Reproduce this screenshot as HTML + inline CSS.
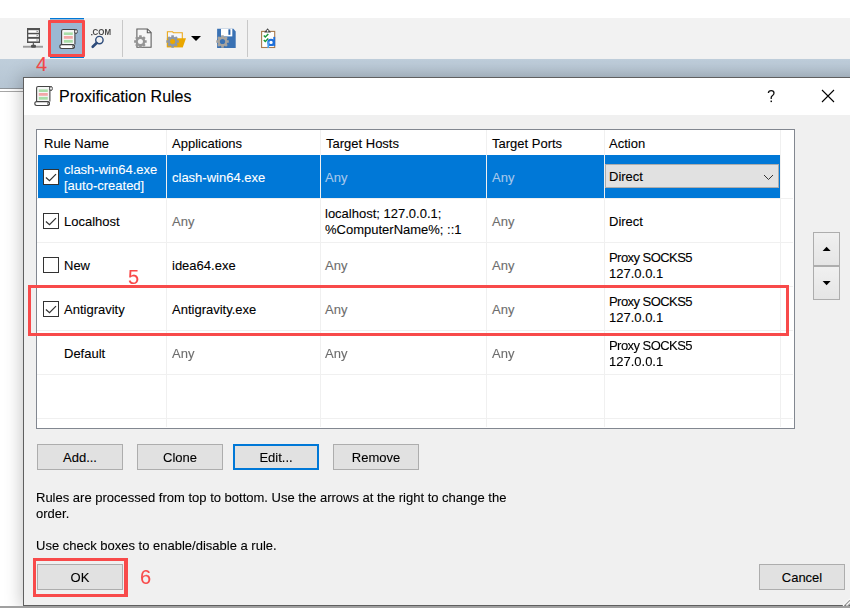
<!DOCTYPE html>
<html><head><meta charset="utf-8">
<style>
*{box-sizing:border-box;margin:0;padding:0}
html,body{width:850px;height:608px;overflow:hidden;background:#fff;font-family:"Liberation Sans",sans-serif;font-size:13px;color:#000;-webkit-text-stroke:0.1px}
.a{position:absolute}
.t{position:absolute;white-space:nowrap;line-height:16px;font-size:13px}
.g{color:#6d6d6d}
.w{color:#fff}
.btn{position:absolute;background:#e1e1e1;border:1px solid #adadad;text-align:center;line-height:24px;font-size:13px;padding-top:1px}
.vl{position:absolute;width:1px;background:#f0f0f0}
.hl{position:absolute;height:1px;background:#f0f0f0;left:37px;width:757px}
.cb{position:absolute;left:43px;width:16px;height:16px;border:1px solid #333;background:#fff}
.red{position:absolute;border:3px solid #f84a4a}
.num{position:absolute;color:#f84a4a;font-size:19px;line-height:20px}
</style></head><body>
<!-- toolbar -->
<div class="a" style="left:0;top:18px;width:850px;height:41px;background:#f2f2f2"></div>
<div class="a" style="left:50px;top:18px;width:34px;height:40px;background:#9bb8d3;border-top:1px solid #0078d7;border-bottom:1px solid #0078d7"></div>
<div class="a" style="left:122px;top:20px;width:1px;height:37px;background:#c8c8c8"></div>
<div class="a" style="left:247px;top:20px;width:1px;height:37px;background:#c8c8c8"></div>

<!-- server icon -->
<svg class="a" style="left:20px;top:24px" width="26" height="26" viewBox="0 0 26 26">
 <rect x="7" y="4" width="13" height="15" fill="#525252"/>
 <rect x="8.3" y="6.2" width="10.5" height="2.6" fill="#fff"/>
 <rect x="8.3" y="10.3" width="10.5" height="2.6" fill="#fff"/>
 <rect x="8.3" y="14.8" width="10.5" height="2.6" fill="#fff"/>
 <path d="M16.6 6.6 L18.2 7.5 L16.6 8.4Z M16.6 10.7 L18.2 11.6 L16.6 12.5Z M16.6 15.2 L18.2 16.1 L16.6 17Z" fill="#777"/>
 <rect x="12.8" y="19" width="1.2" height="2.5" fill="#666"/>
 <rect x="3" y="21.8" width="20" height="1.9" fill="#9c9c9c"/>
 <rect x="11" y="20.7" width="5" height="3" rx="1.2" fill="#505050"/>
</svg>
<svg class="a" style="left:55px;top:26px" width="26" height="26" viewBox="0 0 26 26"><path d="M6.6 18.5 V5 Q6.6 3.5 8.1 3.5 H19.9 V18.5" fill="#f6f6f6" stroke="#444" stroke-width="1.1"/>
 <ellipse cx="21" cy="5.5" rx="1.35" ry="2.05" fill="#fff" stroke="#444" stroke-width="1"/>
 <rect x="8.8" y="6.4" width="9" height="2.6" fill="#a8dea8"/>
 <rect x="8.8" y="10" width="9" height="2.8" fill="#f2a8a8"/>
 <rect x="8.8" y="13.9" width="9" height="2.8" fill="#a8dea8"/>
 <rect x="4.8" y="18.6" width="14.6" height="3.9" rx="1.95" fill="#fff" stroke="#444" stroke-width="1.1"/>
 <ellipse cx="18.6" cy="20.5" rx="0.9" ry="1.6" fill="none" stroke="#444" stroke-width="0.9"/></svg>
<!-- .COM icon -->
<svg class="a" style="left:87px;top:24px;will-change:transform" width="28" height="28" viewBox="0 0 28 28">
 <rect x="4" y="10" width="1.5" height="1.3" fill="#555"/>
 <text x="5.6" y="10.9" font-family="Liberation Sans" font-weight="bold" font-size="8.2" fill="#4a4a4a" textLength="18.5" lengthAdjust="spacingAndGlyphs">COM</text>
 <circle cx="12.4" cy="16.1" r="3.7" fill="none" stroke="#2d4b7a" stroke-width="1.4"/>
 <line x1="9.6" y1="19" x2="5.7" y2="22.8" stroke="#2d4b7a" stroke-width="2.6" stroke-linecap="round"/>
</svg>
<!-- doc gear -->
<svg class="a" style="left:130px;top:24px" width="28" height="28" viewBox="0 0 28 28">
 <path d="M6.9 4.9 H17.5 L21.1 8.5 V23.2 H6.9 Z" fill="#f6f6f6" stroke="#5a5a5a" stroke-width="1.05"/>
 <path d="M17.3 4.9 V8.7 H21.1" fill="none" stroke="#5a5a5a" stroke-width="1.05"/>
 <path d="M9.07 12.78 L9.15 11.22 L11.65 11.22 L11.73 12.78 L12.79 13.22 L13.96 12.18 L15.72 13.94 L14.68 15.11 L15.12 16.17 L16.68 16.25 L16.68 18.75 L15.12 18.83 L14.68 19.89 L15.72 21.06 L13.96 22.82 L12.79 21.78 L11.73 22.22 L11.65 23.78 L9.15 23.78 L9.07 22.22 L8.01 21.78 L6.84 22.82 L5.08 21.06 L6.12 19.89 L5.68 18.83 L4.12 18.75 L4.12 16.25 L5.68 16.17 L6.12 15.11 L5.08 13.94 L6.84 12.18 L8.01 13.22 Z" fill="#959595"/>
 <circle cx="10.4" cy="17.5" r="2.5" fill="#f6f6f6"/>
</svg>
<!-- folder -->
<svg class="a" style="left:162px;top:24px" width="28" height="28" viewBox="0 0 28 28">
 <path d="M5.4 7.7 H10.5 L11.3 8.7 H20.3 V22.7 H5.4 Z" fill="#f4f7fc" stroke="#eba81a" stroke-width="1.1"/>
 <path d="M14.6 14.3 H24 L20.8 23.2 H4.9 V14.3 Z" fill="#eaa700"/>
 <path d="M9.27 12.78 L9.35 11.22 L11.85 11.22 L11.93 12.78 L12.99 13.22 L14.16 12.18 L15.92 13.94 L14.88 15.11 L15.32 16.17 L16.88 16.25 L16.88 18.75 L15.32 18.83 L14.88 19.89 L15.92 21.06 L14.16 22.82 L12.99 21.78 L11.93 22.22 L11.85 23.78 L9.35 23.78 L9.27 22.22 L8.21 21.78 L7.04 22.82 L5.28 21.06 L6.32 19.89 L5.88 18.83 L4.32 18.75 L4.32 16.25 L5.88 16.17 L6.32 15.11 L5.28 13.94 L7.04 12.18 L8.21 13.22 Z" fill="#8e98a6"/>
 <circle cx="10.6" cy="17.5" r="2.5" fill="#eaa700"/>
</svg>
<svg class="a" style="left:190px;top:35px" width="12" height="7" viewBox="0 0 12 7"><path d="M1 1 H11 L6 6 Z" fill="#000"/></svg>
<!-- floppy -->
<svg class="a" style="left:212px;top:24px" width="28" height="28" viewBox="0 0 28 28">
 <path d="M5.1 4.8 H21.4 L23.7 7.4 V24 H5.1 Z" fill="#3a72b4"/>
 <rect x="9" y="4.8" width="11.3" height="7.6" fill="#fff"/>
 <rect x="16.4" y="5.3" width="2" height="5.5" fill="#2a62a8"/>
 <path d="M9.17 12.78 L9.25 11.22 L11.75 11.22 L11.83 12.78 L12.89 13.22 L14.06 12.18 L15.82 13.94 L14.78 15.11 L15.22 16.17 L16.78 16.25 L16.78 18.75 L15.22 18.83 L14.78 19.89 L15.82 21.06 L14.06 22.82 L12.89 21.78 L11.83 22.22 L11.75 23.78 L9.25 23.78 L9.17 22.22 L8.11 21.78 L6.94 22.82 L5.18 21.06 L6.22 19.89 L5.78 18.83 L4.22 18.75 L4.22 16.25 L5.78 16.17 L6.22 15.11 L5.18 13.94 L6.94 12.18 L8.11 13.22 Z" fill="#a8a49e"/>
 <circle cx="10.5" cy="17.5" r="2.6" fill="#3a72b4"/>
</svg>
<!-- clipboard -->
<svg class="a" style="left:254px;top:24px" width="28" height="28" viewBox="0 0 28 28">
 <rect x="7.6" y="7.4" width="13.1" height="16.1" fill="#fff" stroke="#a87a4c" stroke-width="1.1"/>
 <path d="M10.1 8.4 L13.6 4.2 L17 8.4 Z" fill="#444"/>
 <circle cx="13.6" cy="6.8" r="0.9" fill="#fff"/>
 <path d="M9.8 11.5 L11.3 13 L14.3 10" fill="none" stroke="#1a9a3a" stroke-width="1.5"/>
 <path d="M9.8 16 L11.3 17.5 L14.3 14.5" fill="none" stroke="#1a9a3a" stroke-width="1.5"/>
 <circle cx="17" cy="18.4" r="2.7" fill="none" stroke="#1e6fd9" stroke-width="2"/>
 <rect x="19.3" y="12.9" width="1.9" height="9.2" fill="#1e6fd9"/>
 <rect x="13.4" y="17.5" width="1.7" height="6.5" fill="#4aa0f0"/>
</svg>
<div class="red" style="left:48px;top:20px;width:37px;height:37px;border-radius:1px"></div>

<!-- blue bar -->
<div class="a" style="left:0;top:59px;width:850px;height:29px;background:linear-gradient(#bfcedb,#b6c5d3)"></div>
<div class="a" style="left:0;top:88px;width:850px;height:1px;background:#8e9398"></div>
<div class="a" style="left:0;top:91px;width:850px;height:1px;background:#a6a6a6"></div>
<div class="num" style="left:36px;top:53px;font-size:20px;line-height:22px">4</div>

<!-- dialog -->
<div class="a" style="left:23px;top:77px;width:840px;height:529px;border:1px solid #5f5f5f;background:#f0f0f0;box-shadow:0 0 16px 2px rgba(0,0,0,0.22)"></div>
<div class="a" style="left:24px;top:78px;width:830px;height:37px;background:#fff"></div>
<div class="a" style="left:0;top:606px;width:850px;height:2px;background:#a0a0a0"></div>
<svg class="a" style="left:840px;top:596px" width="10" height="10" viewBox="0 0 10 10"><path d="M3 10 L10 3 M6.5 10 L10 6.5" stroke="#fff" stroke-width="1.2"/><path d="M4.2 10 L10 4.2 M7.7 10 L10 7.7" stroke="#9a9a9a" stroke-width="1.1"/></svg>
<svg class="a" style="left:30px;top:83px" width="26" height="26" viewBox="0 0 26 26"><path d="M6.6 18.5 V5 Q6.6 3.5 8.1 3.5 H19.9 V18.5" fill="#f6f6f6" stroke="#444" stroke-width="1.1"/>
 <ellipse cx="21" cy="5.5" rx="1.35" ry="2.05" fill="#fff" stroke="#444" stroke-width="1"/>
 <rect x="8.8" y="6.4" width="9" height="2.6" fill="#a8dea8"/>
 <rect x="8.8" y="10" width="9" height="2.8" fill="#f2a8a8"/>
 <rect x="8.8" y="13.9" width="9" height="2.8" fill="#a8dea8"/>
 <rect x="4.8" y="18.6" width="14.6" height="3.9" rx="1.95" fill="#fff" stroke="#444" stroke-width="1.1"/>
 <ellipse cx="18.6" cy="20.5" rx="0.9" ry="1.6" fill="none" stroke="#444" stroke-width="0.9"/></svg>
<div class="t" style="left:59px;top:88px;font-size:16px;line-height:18px">Proxification Rules</div>
<svg class="a" style="left:765px;top:88px" width="12" height="16" viewBox="0 0 12 16"><path d="M3.4 5 Q3.4 2.7 6.2 2.7 Q9 2.7 9 5.1 Q9 6.7 7.3 7.7 Q6.2 8.4 6.2 9.8 V11" fill="none" stroke="#111" stroke-width="1.3"/><rect x="5.5" y="12.6" width="1.5" height="1.5" fill="#111"/></svg>
<svg class="a" style="left:821px;top:89px" width="14" height="14" viewBox="0 0 14 14"><path d="M1 1 L13 13 M13 1 L1 13" stroke="#000" stroke-width="1.1"/></svg>

<!-- list -->
<div class="a" style="left:36px;top:129px;width:759px;height:300px;border:1px solid #828790;background:#fff"></div>
<div class="t" style="left:44px;top:136px">Rule Name</div>
<div class="t" style="left:172px;top:136px">Applications</div>
<div class="t" style="left:326px;top:136px">Target Hosts</div>
<div class="t" style="left:492px;top:136px">Target Ports</div>
<div class="t" style="left:609px;top:136px">Action</div>

<div class="a" style="left:38px;top:155px;width:742px;height:43px;background:#0078d7"></div>

<div class="vl" style="left:166px;top:130px;height:297px"></div>
<div class="vl" style="left:320px;top:130px;height:297px"></div>
<div class="vl" style="left:486px;top:130px;height:297px"></div>
<div class="vl" style="left:604px;top:130px;height:297px"></div>
<div class="vl" style="left:780px;top:130px;height:297px"></div>
<div class="hl" style="top:198px;width:756px"></div>
<div class="hl" style="top:242px;width:756px"></div>
<div class="hl" style="top:286px;width:756px"></div>
<div class="hl" style="top:330px;width:756px"></div>
<div class="hl" style="top:374px;width:756px"></div>
<div class="hl" style="top:418px;width:756px"></div>

<div class="a" style="left:0;top:1px;width:850px;height:400px">
<!-- row1 -->
<div class="cb" style="top:168px"><svg width="14" height="14" viewBox="0 0 14 14" style="position:absolute;left:0;top:0"><path d="M1.9 7.5 L5.5 10.6 L12 4.1" fill="none" stroke="#333" stroke-width="1.25"/></svg></div>
<div class="t w" style="left:64px;top:161px">clash-win64.exe</div>
<div class="t w" style="left:64px;top:177px">[auto-created]</div>
<div class="t w" style="left:172px;top:169px">clash-win64.exe</div>
<div class="t" style="left:325px;top:169px;color:#a8c8ec">Any</div>
<div class="t" style="left:492px;top:169px;color:#a8c8ec">Any</div>
<div class="a" style="left:605px;top:163px;width:174px;height:24px;background:#e1e1e1;border:1px solid #adadad"></div>
<div class="t" style="left:609px;top:168px">Direct</div>
<svg class="a" style="left:763px;top:173px" width="11" height="7" viewBox="0 0 11 7"><path d="M1 1 L5.5 5.5 L10 1" fill="none" stroke="#333" stroke-width="1"/></svg>

<!-- row2 -->
<div class="cb" style="top:212px"><svg width="14" height="14" viewBox="0 0 14 14" style="position:absolute;left:0;top:0"><path d="M1.9 7.5 L5.5 10.6 L12 4.1" fill="none" stroke="#333" stroke-width="1.25"/></svg></div>
<div class="t" style="left:64px;top:213px">Localhost</div>
<div class="t g" style="left:172px;top:213px">Any</div>
<div class="t" style="left:325px;top:205px">localhost; 127.0.0.1;</div>
<div class="t" style="left:325px;top:221px">%ComputerName%; ::1</div>
<div class="t g" style="left:492px;top:213px">Any</div>
<div class="t" style="left:609px;top:213px">Direct</div>

<!-- row3 -->
<div class="cb" style="top:256px"></div>
<div class="t" style="left:64px;top:257px">New</div>
<div class="t" style="left:172px;top:257px">idea64.exe</div>
<div class="t g" style="left:325px;top:257px">Any</div>
<div class="t g" style="left:492px;top:257px">Any</div>
<div class="t" style="left:609px;top:249px;letter-spacing:-0.55px">Proxy SOCKS5</div>
<div class="t" style="left:609px;top:265px">127.0.0.1</div>

<!-- row4 -->
<div class="cb" style="top:300px"><svg width="14" height="14" viewBox="0 0 14 14" style="position:absolute;left:0;top:0"><path d="M1.9 7.5 L5.5 10.6 L12 4.1" fill="none" stroke="#333" stroke-width="1.25"/></svg></div>
<div class="t" style="left:64px;top:301px">Antigravity</div>
<div class="t" style="left:172px;top:301px">Antigravity.exe</div>
<div class="t g" style="left:325px;top:301px">Any</div>
<div class="t g" style="left:492px;top:301px">Any</div>
<div class="t" style="left:609px;top:293px;letter-spacing:-0.55px">Proxy SOCKS5</div>
<div class="t" style="left:609px;top:309px">127.0.0.1</div>

<!-- row5 -->
<div class="t" style="left:64px;top:345px">Default</div>
<div class="t g" style="left:172px;top:345px">Any</div>
<div class="t g" style="left:325px;top:345px">Any</div>
<div class="t g" style="left:492px;top:345px">Any</div>
<div class="t" style="left:609px;top:337px;letter-spacing:-0.55px">Proxy SOCKS5</div>
<div class="t" style="left:609px;top:353px">127.0.0.1</div>

</div>
<div class="red" style="left:28px;top:285px;width:761px;height:51px"></div>
<div class="num" style="left:128px;top:266px;font-size:20px;line-height:22px">5</div>

<!-- arrows -->
<div class="a" style="left:813px;top:232px;width:27px;height:34px;border:1px solid #adadad;background:linear-gradient(#f0f0f0,#e5e5e5)"></div>
<div class="a" style="left:813px;top:266px;width:27px;height:34px;border:1px solid #adadad;background:linear-gradient(#f0f0f0,#e5e5e5)"></div>
<svg class="a" style="left:822px;top:246px" width="10" height="6" viewBox="0 0 10 6"><path d="M0.6 5 L4.6 0.7 L8.6 5 Z" fill="#000"/></svg>
<svg class="a" style="left:822px;top:281px" width="10" height="6" viewBox="0 0 10 6"><path d="M0.6 0 L4.6 4.3 L8.6 0 Z" fill="#000"/></svg>

<!-- buttons -->
<div class="btn" style="left:37px;top:444px;width:86px;height:26px">Add...</div>
<div class="btn" style="left:137px;top:444px;width:86px;height:26px">Clone</div>
<div class="btn" style="left:233px;top:444px;width:86px;height:26px;border:2px solid #0078d7;line-height:22px">Edit...</div>
<div class="btn" style="left:333px;top:444px;width:86px;height:26px">Remove</div>

<div class="t" style="left:36px;top:490px">Rules are processed from top to bottom. Use the arrows at the right to change the</div>
<div class="t" style="left:36px;top:506px">order.</div>
<div class="t" style="left:36px;top:538px">Use check boxes to enable/disable a rule.</div>

<div class="btn" style="left:37px;top:564px;width:86px;height:26px">OK</div>
<div class="red" style="left:33px;top:558px;width:95px;height:39px;border-right-width:4px"></div>
<div class="num" style="left:140px;top:566px;font-size:20px;line-height:22px">6</div>
<div class="btn" style="left:759px;top:564px;width:86px;height:26px">Cancel</div>
</body></html>
